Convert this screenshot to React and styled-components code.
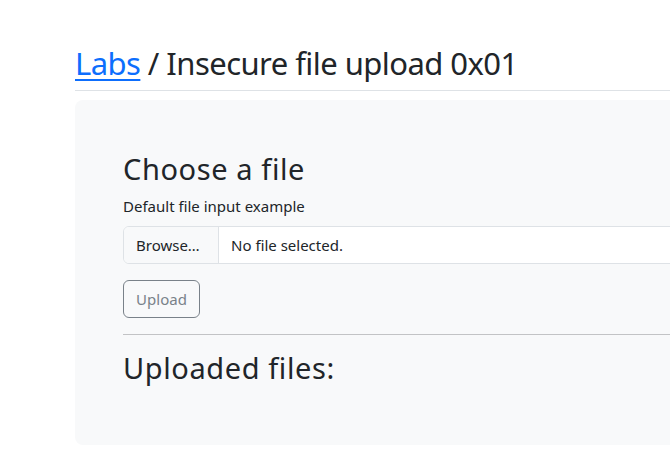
import React from "react";
import styled, { createGlobalStyle } from "styled-components";

const GlobalStyle = createGlobalStyle`
  html, body { margin: 0; padding: 0; overflow: hidden; background: #fff; }
  body {
    font-family: "Noto Sans", "Open Sans", sans-serif;
    color: #212529;
    font-size: 15px;
    line-height: 1.5;
  }
  * { box-sizing: border-box; }
`;

const Page = styled.main`
  padding: 44px 0 0 75px;
  width: 760px;
`;

const Title = styled.h1`
  margin: 0;
  padding-bottom: 8px;
  font-size: 31px;
  font-weight: 400;
  letter-spacing: -0.55px;
  line-height: 38px;
  border-bottom: 1px solid #dee2e6;
`;

const TitleLink = styled.a`
  color: #0d6efd;
  text-decoration: underline;
  text-decoration-thickness: 2px;
  text-underline-offset: 4px;
`;

const Panel = styled.section`
  margin-top: 9px;
  background: #f8f9fa;
  border-radius: 8px;
  padding: 52px 48px 50px;
`;

const Heading = styled.h2`
  margin: 0 0 ${(p) => p.$mb ?? 8}px;
  font-size: 29px;
  font-weight: 400;
  letter-spacing: 0.6px;
  line-height: 34px;
`;

const Label = styled.label`
  display: block;
  margin: 6px 0 8px;
  line-height: 24px;
`;

const FileField = styled.div`
  display: flex;
  height: 38px;
  border: 1px solid #dee2e6;
  border-radius: 6px;
  background: #fff;
  overflow: hidden;
  margin-bottom: 16px;
`;

const BrowseButton = styled.span`
  display: flex;
  align-items: center;
  width: 95px;
  padding: 0 12px;
  background: #f8f9fa;
  border-right: 1px solid #dee2e6;
`;

const FileName = styled.span`
  display: flex;
  align-items: center;
  padding: 0 12px;
`;

const UploadButton = styled.button`
  font: inherit;
  height: 38px;
  width: 77px;
  padding: 0;
  background: transparent;
  border: 1px solid #6c757d;
  border-radius: 6px;
  color: #6c757d;
  opacity: 0.9;
`;

const Rule = styled.hr`
  margin: 16px 0;
  border: 0;
  border-top: 1px solid #212529;
  opacity: 0.25;
`;

export default function App() {
  return (
    <>
      <GlobalStyle />
      <Page>
        <Title>
          <TitleLink href="#">Labs</TitleLink> / Insecure file upload 0x01
        </Title>
        <Panel>
          <Heading>Choose a file</Heading>
          <Label>Default file input example</Label>
          <FileField>
            <BrowseButton>Browse…</BrowseButton>
            <FileName>No file selected.</FileName>
          </FileField>
          <UploadButton disabled>Upload</UploadButton>
          <Rule />
          <Heading $mb={10}>Uploaded files:</Heading>
        </Panel>
      </Page>
    </>
  );
}
